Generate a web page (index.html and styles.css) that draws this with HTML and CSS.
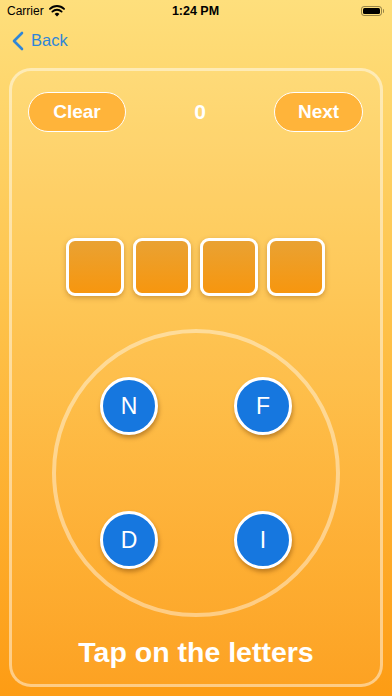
FILE: index.html
```html
<!DOCTYPE html>
<html lang="en">
<head>
    <meta charset="UTF-8">
    <meta name="viewport" content="width=device-width, initial-scale=1.0">
    <title>Word Game</title>
    <link rel="stylesheet" href="styles.css">
</head>
<body>

    <div class="status-bar">
        <div class="status-left">
            <span>Carrier</span>
            <svg class="wifi" width="16" height="12" viewBox="0 0 16 12">
                <path d="M8 11.5 L5.6 8.9 A3.4 3.4 0 0 1 10.4 8.9 Z" fill="#000"/>
                <path d="M3.4 6.6 A6.6 6.6 0 0 1 12.6 6.6" fill="none" stroke="#000" stroke-width="1.9" stroke-linecap="round"/>
                <path d="M1 3.9 A10 10 0 0 1 15 3.9" fill="none" stroke="#000" stroke-width="1.9" stroke-linecap="round"/>
            </svg>
        </div>
        <div class="status-time">1:24 PM</div>
        <div class="status-right">
            <div class="battery"><div class="battery-level"></div></div>
            <div class="battery-nub"></div>
        </div>
    </div>

    <div class="nav-bar">
        <a class="back" href="#">
            <svg width="12" height="20" viewBox="0 0 12 20">
                <path d="M10 2 L2 10 L10 18" fill="none" stroke="#2f86d8" stroke-width="2.6" stroke-linecap="round" stroke-linejoin="round"/>
            </svg>
            <span>Back</span>
        </a>
    </div>

    <div class="panel">
        <div class="top-row">
            <button class="pill">Clear</button>
            <div class="score">0</div>
            <button class="pill">Next</button>
        </div>

        <div class="slots">
            <div class="slot"></div>
            <div class="slot"></div>
            <div class="slot"></div>
            <div class="slot"></div>
        </div>

        <div class="wheel">
            <button class="letter">N</button>
            <button class="letter">F</button>
            <button class="letter">D</button>
            <button class="letter">I</button>
        </div>

        <div class="hint">Tap on the letters</div>
    </div>

</body>
</html>
```

FILE: styles.css
```css
/* General Styles */
body {
    margin: 0;
    width: 392px;
    height: 696px;
    overflow: hidden;
    font-family: "Liberation Sans", Arial, sans-serif;
    background: linear-gradient(to bottom, #fedf7c 0%, #fec24a 45%, #fd9c14 100%);
}

/* Status bar */
.status-bar {
    height: 22px;
    display: flex;
    align-items: center;
    justify-content: space-between;
    padding: 0 7px;
    font-size: 12px;
    color: #000;
}

.status-left {
    display: flex;
    align-items: center;
    gap: 5px;
    width: 90px;
}

.status-time {
    font-weight: bold;
    font-size: 12.5px;
}

.status-right {
    width: 90px;
    display: flex;
    justify-content: flex-end;
    align-items: center;
    padding-right: 1px;
}

.battery {
    width: 21px;
    height: 10px;
    border: 1px solid rgba(0, 0, 0, 0.4);
    border-radius: 3px;
    padding: 1px;
    box-sizing: border-box;
}

.battery-level {
    width: 100%;
    height: 100%;
    background: #000;
    border-radius: 1.5px;
}

.battery-nub {
    width: 1.5px;
    height: 4px;
    margin-left: 1px;
    background: rgba(0, 0, 0, 0.4);
    border-radius: 0 1px 1px 0;
}

/* Navigation */
.nav-bar {
    height: 37px;
    display: flex;
    align-items: center;
    padding-left: 12px;
}

.back {
    display: flex;
    align-items: center;
    gap: 7px;
    color: #2f86d8;
    font-size: 16.5px;
    text-decoration: none;
}

/* Main panel */
.panel {
    margin: 9px 9px 0;
    height: 619px;
    border: 3px solid rgba(255, 255, 255, 0.45);
    border-radius: 22px;
    background: rgba(255, 255, 255, 0.06);
    padding-top: 21px;
    box-sizing: border-box;
}

.top-row {
    display: flex;
    justify-content: space-between;
    align-items: center;
    padding: 0 17px 0 16px;
}

.pill {
    height: 40px;
    padding: 0 22px;
    border: 1.5px solid #fff;
    border-radius: 20px;
    background: #ffb43a;
    color: #fff;
    font-family: inherit;
    font-weight: bold;
    font-size: 19px;
}

.pill:first-child {
    width: 98px;
}

.pill:last-child {
    width: 89px;
    padding: 0;
}

.score {
    color: #fff;
    font-weight: bold;
    font-size: 21px;
}

/* Letter slots */
.slots {
    display: flex;
    justify-content: center;
    gap: 9px;
    margin-top: 106px;
    padding-right: 2px;
}

.slot {
    width: 58px;
    height: 58px;
    box-sizing: border-box;
    border: 3px solid #fff;
    border-radius: 9px;
    background: linear-gradient(to bottom, #e9a233, #f7960e);
    box-shadow: 0 2px 5px rgba(120, 60, 0, 0.35);
}

/* Letter wheel */
.wheel {
    width: 288px;
    height: 288px;
    box-sizing: border-box;
    margin: 33px auto 0;
    border: 4px solid rgba(255, 255, 255, 0.42);
    border-radius: 50%;
    padding: 44px;
    display: grid;
    grid-template-columns: 58px 58px;
    grid-template-rows: 58px 58px;
    gap: 76px;
}

.letter {
    width: 58px;
    height: 58px;
    border-radius: 50%;
    border: 3px solid #fff;
    background: #1677df;
    color: #fff;
    font-family: inherit;
    font-size: 23px;
    padding: 0;
    box-shadow: 1px 3px 4px rgba(100, 50, 0, 0.4);
}

/* Hint */
.hint {
    margin-top: 19px;
    text-align: center;
    color: #fff;
    font-weight: bold;
    font-size: 28.5px;
}
```
